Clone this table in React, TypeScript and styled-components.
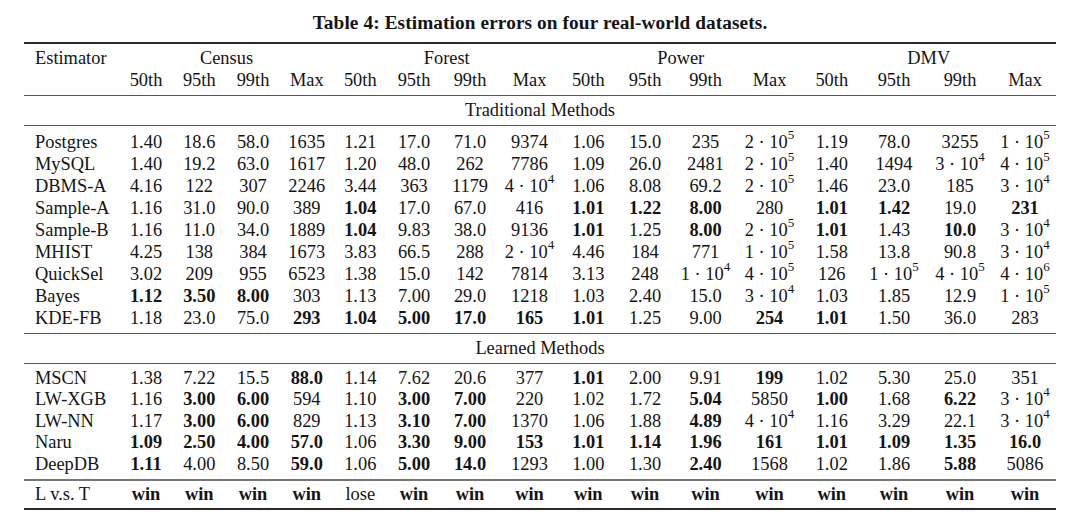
import React from "react";
import styled, { createGlobalStyle } from "styled-components";

const GlobalStyle = createGlobalStyle`
  html, body { margin: 0; padding: 0; background: #ffffff; }
  body { font-family: "Liberation Serif", "Times New Roman", serif; color: #141414; }
`;

const COLS =
  "95.5px 53px 53.5px 54px 53.5px 53.5px 54px 58px 61px 56.5px 57px 64px 64px 60.5px 64px 68px 62px";

const Page = styled.div`
  width: 1080px;
  height: 527px;
  overflow: hidden;
`;

const Caption = styled.div`
  padding-top: 12px;
  height: 22px;
  line-height: 22px;
  text-align: center;
  font-weight: 700;
  font-size: 19.3px;
  letter-spacing: 0.1px;
`;

const Table = styled.div`
  margin: 8px 24px 0 24px;
  width: 1032px;
  font-size: 18.4px;
`;

const Rule = styled.div<{ $h: number; $c: string }>`
  height: ${(p) => p.$h}px;
  background: ${(p) => p.$c};
`;

const Row = styled.div<{ $h: number; $lh?: number; $pt?: number }>`
  display: grid;
  grid-template-columns: ${COLS};
  height: ${(p) => p.$h}px;
  line-height: ${(p) => p.$lh ?? p.$h}px;
  padding-top: ${(p) => p.$pt ?? 0}px;
  box-sizing: content-box;
`;

const Body = styled.div<{ $pt: number; $pb: number }>`
  padding-top: ${(p) => p.$pt}px;
  padding-bottom: ${(p) => p.$pb}px;
`;

const NameCell = styled.div`
  padding-left: 11px;
  white-space: nowrap;
`;

const Cell = styled.div<{ $bold?: boolean }>`
  text-align: center;
  white-space: nowrap;
  font-weight: ${(p) => (p.$bold ? 700 : 400)};
`;

const GroupCell = styled.div`
  grid-column: span 4;
  text-align: center;
`;

const SectionTitle = styled.div`
  height: 29px;
  line-height: 29px;
  text-align: center;
`;

const Sup = styled.sup`
  font-size: 13px;
  vertical-align: 9px;
  line-height: 0;
`;

const Value: React.FC<{ v: string }> = ({ v }) => {
  const bold = v.startsWith("*");
  const raw = bold ? v.slice(1) : v;
  const [base, exp] = raw.split("^");
  return (
    <Cell $bold={bold}>
      {base.replace("·", " · ")}
      {exp !== undefined && <Sup>{exp}</Sup>}
    </Cell>
  );
};

const traditional: [string, string[]][] = [
  ["Postgres", ["1.40", "18.6", "58.0", "1635", "1.21", "17.0", "71.0", "9374", "1.06", "15.0", "235", "2·10^5", "1.19", "78.0", "3255", "1·10^5"]],
  ["MySQL", ["1.40", "19.2", "63.0", "1617", "1.20", "48.0", "262", "7786", "1.09", "26.0", "2481", "2·10^5", "1.40", "1494", "3·10^4", "4·10^5"]],
  ["DBMS-A", ["4.16", "122", "307", "2246", "3.44", "363", "1179", "4·10^4", "1.06", "8.08", "69.2", "2·10^5", "1.46", "23.0", "185", "3·10^4"]],
  ["Sample-A", ["1.16", "31.0", "90.0", "389", "*1.04", "17.0", "67.0", "416", "*1.01", "*1.22", "*8.00", "280", "*1.01", "*1.42", "19.0", "*231"]],
  ["Sample-B", ["1.16", "11.0", "34.0", "1889", "*1.04", "9.83", "38.0", "9136", "*1.01", "1.25", "*8.00", "2·10^5", "*1.01", "1.43", "*10.0", "3·10^4"]],
  ["MHIST", ["4.25", "138", "384", "1673", "3.83", "66.5", "288", "2·10^4", "4.46", "184", "771", "1·10^5", "1.58", "13.8", "90.8", "3·10^4"]],
  ["QuickSel", ["3.02", "209", "955", "6523", "1.38", "15.0", "142", "7814", "3.13", "248", "1·10^4", "4·10^5", "126", "1·10^5", "4·10^5", "4·10^6"]],
  ["Bayes", ["*1.12", "*3.50", "*8.00", "303", "1.13", "7.00", "29.0", "1218", "1.03", "2.40", "15.0", "3·10^4", "1.03", "1.85", "12.9", "1·10^5"]],
  ["KDE-FB", ["1.18", "23.0", "75.0", "*293", "*1.04", "*5.00", "*17.0", "*165", "*1.01", "1.25", "9.00", "*254", "*1.01", "1.50", "36.0", "283"]],
];

const learned: [string, string[]][] = [
  ["MSCN", ["1.38", "7.22", "15.5", "*88.0", "1.14", "7.62", "20.6", "377", "*1.01", "2.00", "9.91", "*199", "1.02", "5.30", "25.0", "351"]],
  ["LW-XGB", ["1.16", "*3.00", "*6.00", "594", "1.10", "*3.00", "*7.00", "220", "1.02", "1.72", "*5.04", "5850", "*1.00", "1.68", "*6.22", "3·10^4"]],
  ["LW-NN", ["1.17", "*3.00", "*6.00", "829", "1.13", "*3.10", "*7.00", "1370", "1.06", "1.88", "*4.89", "4·10^4", "1.16", "3.29", "22.1", "3·10^4"]],
  ["Naru", ["*1.09", "*2.50", "*4.00", "*57.0", "1.06", "*3.30", "*9.00", "*153", "*1.01", "*1.14", "*1.96", "*161", "*1.01", "*1.09", "*1.35", "*16.0"]],
  ["DeepDB", ["*1.11", "4.00", "8.50", "*59.0", "1.06", "*5.00", "*14.0", "1293", "1.00", "1.30", "*2.40", "1568", "1.02", "1.86", "*5.88", "5086"]],
];

const summary = ["*win", "*win", "*win", "*win", "lose", "*win", "*win", "*win", "*win", "*win", "*win", "*win", "*win", "*win", "*win", "*win"];

const groups = ["Census", "Forest", "Power", "DMV"];
const stats = ["50th", "95th", "99th", "Max"];

const DataRow: React.FC<{ name: string; values: string[]; h: number }> = ({ name, values, h }) => (
  <Row $h={h}>
    <NameCell>{name}</NameCell>
    {values.map((v, i) => (
      <Value key={i} v={v} />
    ))}
  </Row>
);

export default function App() {
  return (
    <Page>
      <GlobalStyle />
      <Caption>Table 4: Estimation errors on four real-world datasets.</Caption>
      <Table>
        <Rule $h={2} $c="#2a2a2a" />
        <Row $h={22} $pt={3}>
          <NameCell>Estimator</NameCell>
          {groups.map((g) => (
            <GroupCell key={g}>{g}</GroupCell>
          ))}
        </Row>
        <Row $h={23} $lh={16} $pt={3}>
          <NameCell />
          {groups.flatMap((g) =>
            stats.map((s) => <Cell key={g + s}>{s}</Cell>)
          )}
        </Row>
        <Rule $h={1} $c="#555" />
        <SectionTitle>Traditional Methods</SectionTitle>
        <Rule $h={1} $c="#555" />
        <Body $pt={4.5} $pb={4.5}>
          {traditional.map(([n, v]) => (
            <DataRow key={n} name={n} values={v} h={22} />
          ))}
        </Body>
        <Rule $h={1} $c="#555" />
        <SectionTitle>Learned Methods</SectionTitle>
        <Rule $h={1} $c="#555" />
        <Body $pt={3.5} $pb={4}>
          {learned.map(([n, v]) => (
            <DataRow key={n} name={n} values={v} h={21.5} />
          ))}
        </Body>
        <Rule $h={2} $c="#777" />
        <Row $h={27}>
          <NameCell>L v.s. T</NameCell>
          {summary.map((v, i) => (
            <Value key={i} v={v} />
          ))}
        </Row>
        <Rule $h={2} $c="#2a2a2a" />
      </Table>
    </Page>
  );
}
